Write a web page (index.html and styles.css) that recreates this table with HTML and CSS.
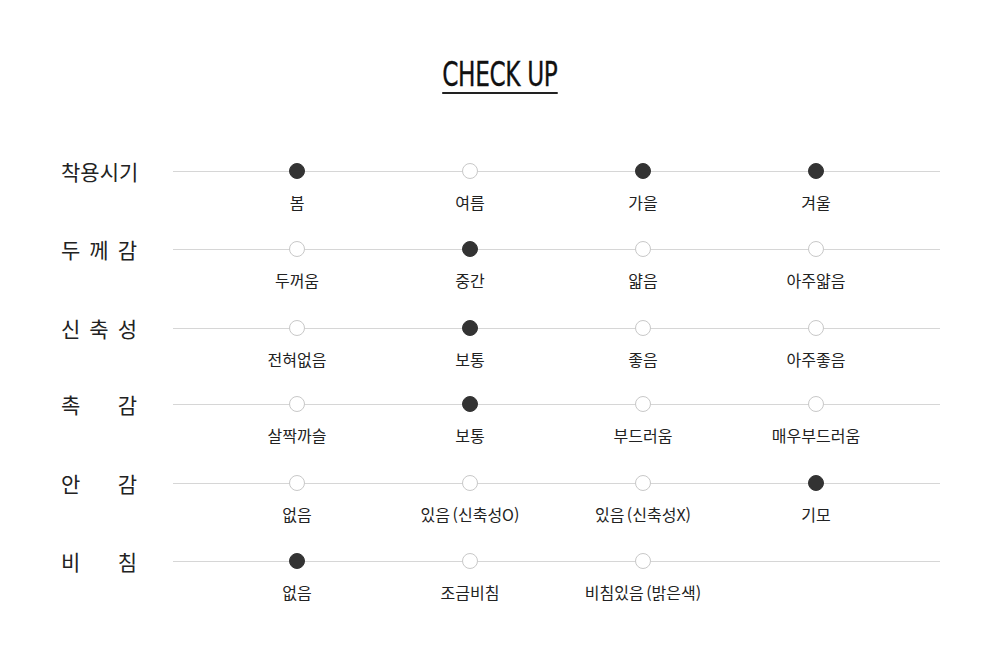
FILE: index.html
```html
<!DOCTYPE html>
<html lang="ko">
<head>
<meta charset="utf-8">
<link rel="stylesheet" href="styles.css">
</head>
<body>
<div class="page">
  <h2 class="title"><span class="title-text">CHECK UP</span></h2>
  <div class="rows">
    <div class="row">
      <div class="label">착용시기</div>
      <div class="track">
        <div class="opt on"><i class="dot"></i><span class="txt">봄</span></div>
        <div class="opt"><i class="dot"></i><span class="txt">여름</span></div>
        <div class="opt on"><i class="dot"></i><span class="txt">가을</span></div>
        <div class="opt on"><i class="dot"></i><span class="txt">겨울</span></div>
      </div>
    </div>
    <div class="row">
      <div class="label">두 께 감</div>
      <div class="track">
        <div class="opt"><i class="dot"></i><span class="txt">두꺼움</span></div>
        <div class="opt on"><i class="dot"></i><span class="txt">중간</span></div>
        <div class="opt"><i class="dot"></i><span class="txt">얇음</span></div>
        <div class="opt"><i class="dot"></i><span class="txt">아주얇음</span></div>
      </div>
    </div>
    <div class="row">
      <div class="label">신 축 성</div>
      <div class="track">
        <div class="opt"><i class="dot"></i><span class="txt">전혀없음</span></div>
        <div class="opt on"><i class="dot"></i><span class="txt">보통</span></div>
        <div class="opt"><i class="dot"></i><span class="txt">좋음</span></div>
        <div class="opt"><i class="dot"></i><span class="txt">아주좋음</span></div>
      </div>
    </div>
    <div class="row">
      <div class="label">촉 감</div>
      <div class="track">
        <div class="opt"><i class="dot"></i><span class="txt">살짝까슬</span></div>
        <div class="opt on"><i class="dot"></i><span class="txt">보통</span></div>
        <div class="opt"><i class="dot"></i><span class="txt">부드러움</span></div>
        <div class="opt"><i class="dot"></i><span class="txt">매우부드러움</span></div>
      </div>
    </div>
    <div class="row">
      <div class="label">안 감</div>
      <div class="track">
        <div class="opt"><i class="dot"></i><span class="txt">없음</span></div>
        <div class="opt"><i class="dot"></i><span class="txt">있음 (신축성O)</span></div>
        <div class="opt"><i class="dot"></i><span class="txt">있음 (신축성X)</span></div>
        <div class="opt on"><i class="dot"></i><span class="txt">기모</span></div>
      </div>
    </div>
    <div class="row">
      <div class="label">비 침</div>
      <div class="track three">
        <div class="opt on"><i class="dot"></i><span class="txt">없음</span></div>
        <div class="opt"><i class="dot"></i><span class="txt">조금비침</span></div>
        <div class="opt"><i class="dot"></i><span class="txt">비침있음 (밝은색)</span></div>
      </div>
    </div>
  </div>
</div>
</body>
</html>
```
FILE: styles.css
```css
* { box-sizing: border-box; }
html, body { margin: 0; padding: 0; background: #fff; }
body {
  font-family: "Noto Sans CJK KR", "Noto Sans", sans-serif;
  color: #222;
}
.page {
  width: 1000px;
  padding: 57px 0 0 61px;
}
.title {
  margin: 0 0 0 -61px;
  text-align: center;
  font-weight: normal;
  line-height: 1;
}
.title-text {
  display: inline-block;
  font-family: "DejaVu Sans Condensed", "DejaVu Sans", sans-serif;
  font-stretch: condensed;
  font-size: 34px;
  line-height: 34px;
  color: #111;
  border-bottom: 2px solid #222;
  padding-bottom: 1px;
  transform: scaleX(0.76);
  letter-spacing: -0.5px;
  -webkit-text-stroke: 0.3px #111;
}
.rows {
  margin-top: 69px;
}
.row {
  display: flex;
  align-items: flex-start;
  gap: 36px;
  margin-bottom: 29px;
}
.row:nth-child(2), .row:nth-child(4) { margin-bottom: 30px; }
.row:nth-child(3) { margin-bottom: 27px; }
.label {
  width: 76px;
  font-size: 21px;
  line-height: 16px;
  height: 16px;
  text-align: justify;
  text-align-last: justify;
  color: #222;
  white-space: nowrap;
}
.track {
  position: relative;
  width: 767px;
  padding-left: 37.5px;
  display: grid;
  grid-template-columns: repeat(4, 173px);
}
.track::before {
  content: "";
  position: absolute;
  left: 0;
  right: 0;
  top: 7.5px;
  height: 1px;
  background: #d6d6d6;
}
.opt {
  position: relative;
  display: flex;
  flex-direction: column;
  align-items: center;
}
.dot {
  display: block;
  width: 16px;
  height: 16px;
  border-radius: 50%;
  background: #fff;
  border: 1px solid #c8c8c8;
}
.opt.on .dot {
  background: #333;
  border-color: #333;
}
.txt {
  margin-top: 13px;
  font-size: 16px;
  line-height: 20px;
  color: #222;
  white-space: nowrap;
  word-spacing: -2px;
}
```
